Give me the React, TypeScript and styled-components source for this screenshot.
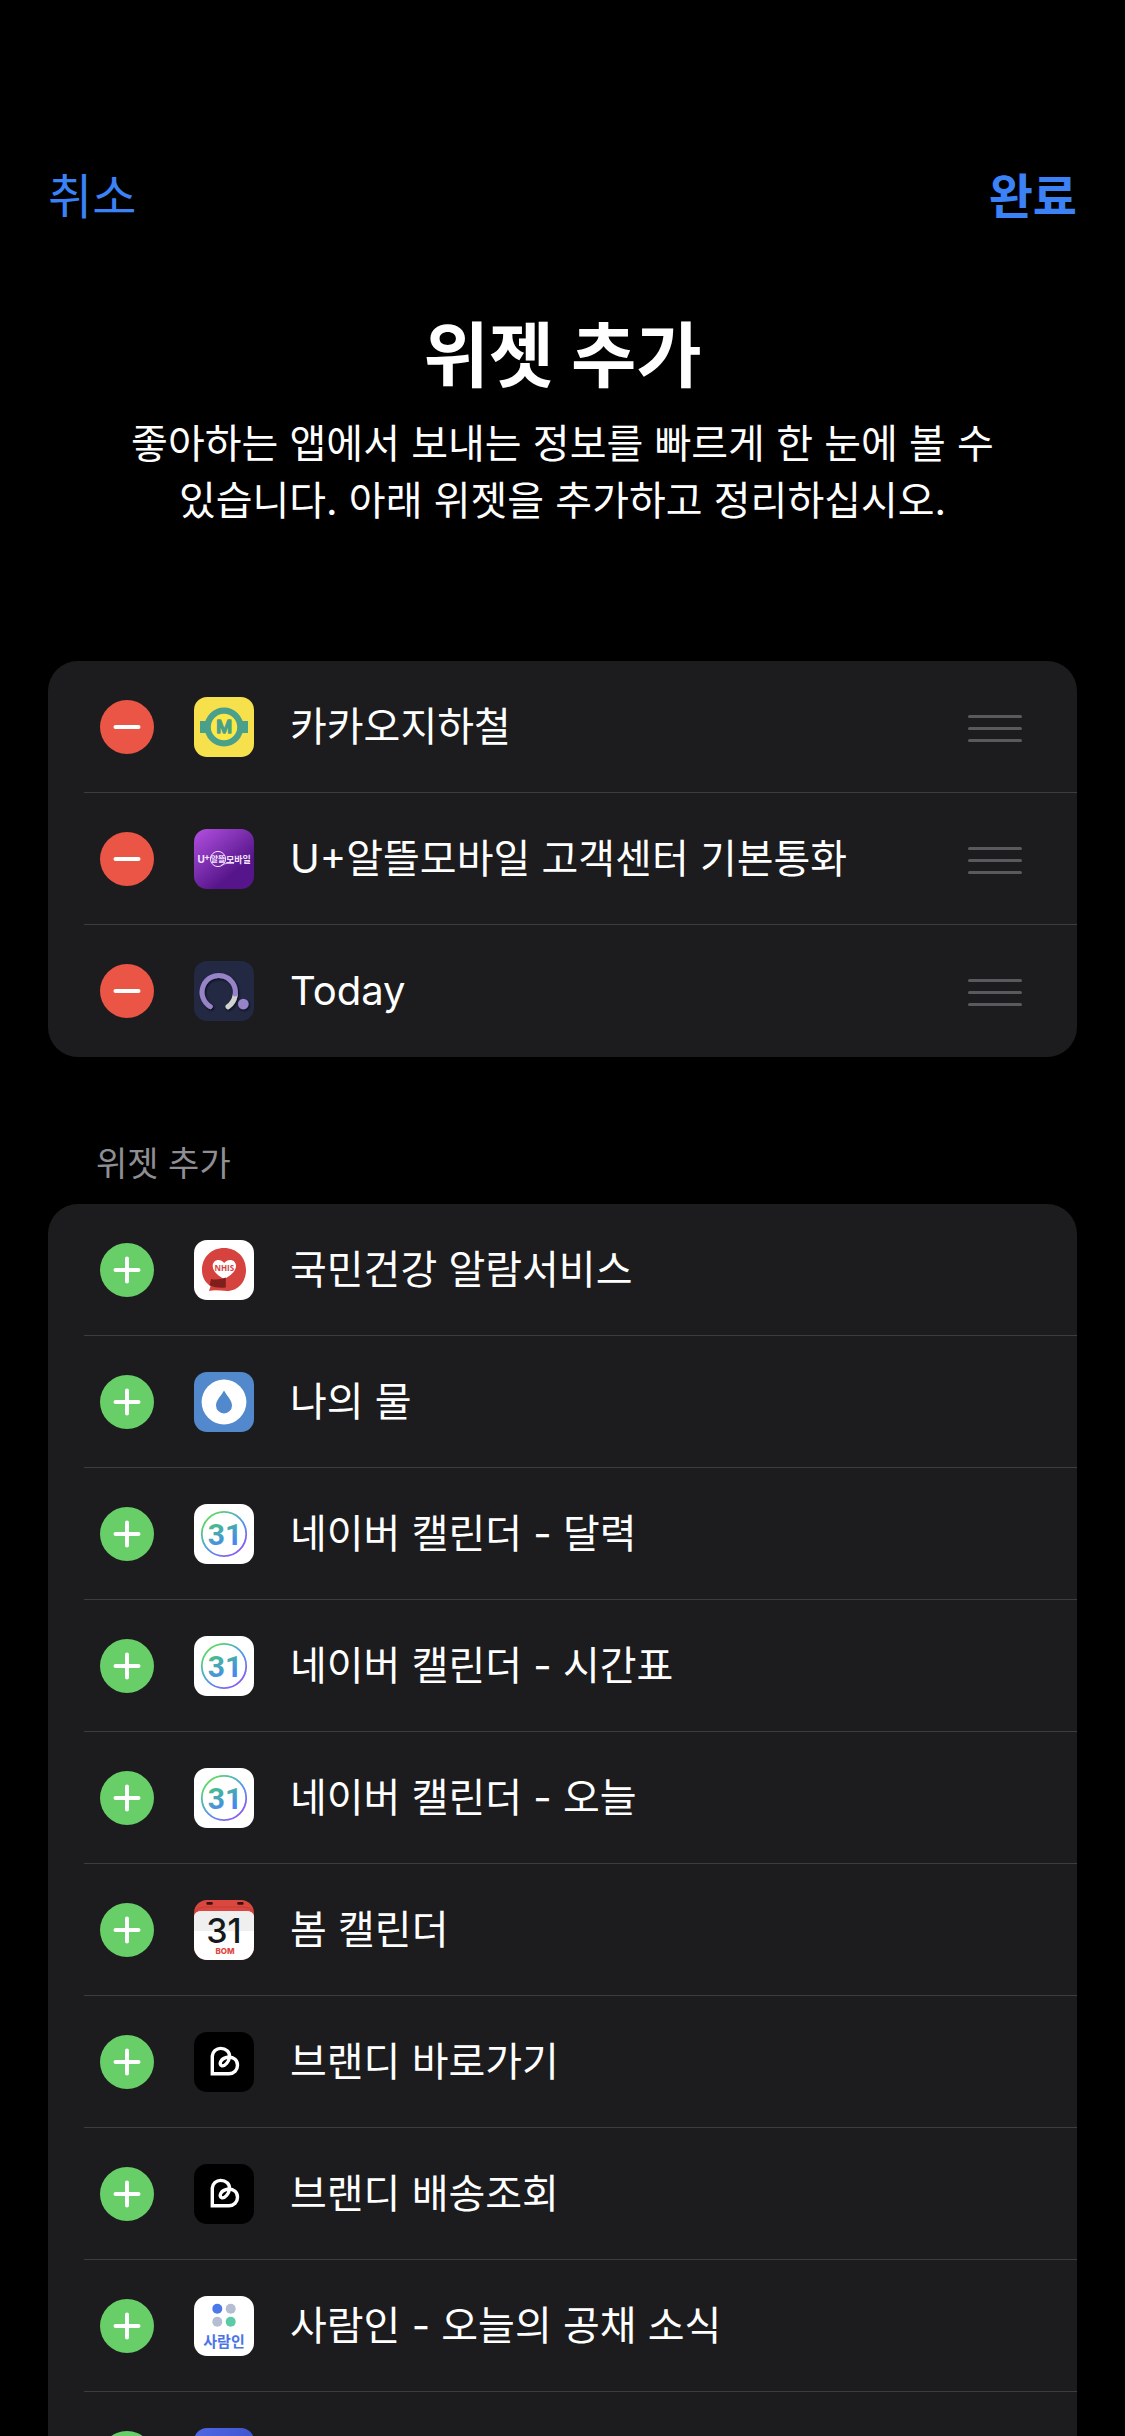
import React from "react";
import styled, { createGlobalStyle } from "styled-components";

const GlobalStyle = createGlobalStyle`
  * { box-sizing: border-box; }
  html, body { margin: 0; background: #000; }
  body { font-family: "Inter", "Noto Sans CJK KR", sans-serif; color: #fff; }
`;

const Screen = styled.main`
  height: 100vh;
  overflow: hidden;
  padding: 161px 48px 0;
  background: #000;
`;

const NavBar = styled.nav`
  display: flex;
  justify-content: space-between;
  align-items: center;
  height: 72px;
`;

const NavButton = styled.button<{ $strong?: boolean }>`
  padding: 0;
  border: 0;
  background: none;
  color: #3b82f7;
  font: inherit;
  font-size: 48px;
  line-height: 72px;
  font-weight: ${(p) => (p.$strong ? 700 : 400)};
`;

const Intro = styled.header`
  padding: 74px 72px 0;
  text-align: center;
`;

const Title = styled.h1`
  margin: 0;
  font-size: 71px;
  line-height: 96px;
  font-weight: 700;
`;

const Description = styled.p`
  margin: 12px 0 0;
  font-size: 40px;
  line-height: 57px;
  word-break: keep-all;
`;

const Section = styled.section<{ $gap: number }>`
  margin-top: ${(p) => p.$gap}px;
`;

const SectionTitle = styled.h2`
  margin: 0;
  padding: 0 48px 16px;
  color: #8e8e93;
  font-size: 34px;
  line-height: 48px;
  font-weight: 400;
`;

const Card = styled.ul`
  margin: 0;
  padding: 0;
  list-style: none;
  border-radius: 30px;
  background: #1c1c1e;
`;

const Row = styled.li`
  display: flex;
  padding-left: 36px;
`;

const RowBody = styled.div<{ $last?: boolean }>`
  display: flex;
  flex: 1;
  align-items: center;
  height: 132px;
  padding: 0 55px 0 16px;
  border-bottom: 1px solid ${(p) => (p.$last ? "transparent" : "#3d3d41")};
`;

const RoundButton = styled.button<{ $color: string }>`
  display: grid;
  place-items: center;
  flex: none;
  width: 54px;
  height: 54px;
  margin-right: 40px;
  padding: 0;
  border: 0;
  border-radius: 50%;
  background: ${(p) => p.$color};
`;

const AppIcon = styled.svg`
  flex: none;
  width: 60px;
  height: 60px;
  margin-right: 36px;
  border-radius: 13px;
`;

const Name = styled.span`
  flex: 1;
  font-size: 40px;
  line-height: 56px;
  white-space: nowrap;
`;

const Handle = styled.button`
  display: flex;
  flex-direction: column;
  gap: 9px;
  width: 54px;
  padding: 4px 0 0;
  border: 0;
  background: none;
`;

const HandleBar = styled.span`
  height: 3px;
  border-radius: 2px;
  background: #5a5a5e;
`;

type IconName =
  | "metro" | "uplus" | "today" | "nhis" | "water"
  | "naver" | "bom" | "brandi" | "saramin" | "blue";

const LATIN = "Inter, sans-serif";
const KOREAN = '"Noto Sans CJK KR", sans-serif';

function Artwork({ name, id }: { name: IconName; id: string }) {
  switch (name) {
    case "metro":
      return (
        <>
          <rect width="60" height="60" fill="#f6e04b" />
          <rect x="6" y="24" width="48" height="12" fill="#4aa08a" />
          <circle cx="30" cy="30" r="16.3" fill="#fde844" stroke="#4aa08a" strokeWidth="6.2" />
          <text x="30" y="36.4" textAnchor="middle" fontFamily="Roboto, sans-serif" fontSize="18" fontWeight="500"
            fill="#4aa08a" stroke="#4aa08a" strokeWidth="1.4" strokeLinejoin="round">M</text>
        </>
      );
    case "uplus":
      return (
        <>
          <defs>
            <linearGradient id={id} x1="0" y1="0" x2="0.75" y2="0.9">
              <stop offset="0" stopColor="#b44fe2" />
              <stop offset="0.45" stopColor="#8232b4" />
              <stop offset="0.85" stopColor="#56158a" />
            </linearGradient>
          </defs>
          <rect width="60" height="60" fill={`url(#${id})`} />
          <g fill="#f4e6ff" fontWeight="700">
            <text x="3.4" y="34" fontFamily={LATIN} fontSize="10">U</text>
            <text x="10" y="31.4" fontFamily={LATIN} fontSize="9">+</text>
            <text x="24" y="33" textAnchor="middle" fontFamily={KOREAN} fontSize="8">알뜰</text>
            <text x="32" y="33.6" fontFamily={KOREAN} fontSize="9">모바일</text>
          </g>
          <circle cx="24" cy="30" r="7.6" fill="none" stroke="#f4e6ff" strokeWidth="1" />
          <path d="M27 36.5 Q30 34.6 33 34.4 H40" fill="none" stroke="#f4e6ff" strokeWidth="0.8" />
        </>
      );
    case "today":
      return (
        <>
          <defs>
            <filter id={id} x="-20%" y="-20%" width="150%" height="150%">
              <feDropShadow dx="1" dy="1.2" stdDeviation="1" floodColor="#05060d" floodOpacity="0.8" />
            </filter>
          </defs>
          <rect width="60" height="60" fill="#232843" />
          <g filter={`url(#${id})`} fill="none" strokeWidth="5" strokeLinecap="round">
            <path d="M41.2 34 Q40 41.5 34 45.6" stroke="#d2d2d0" />
            <path d="M16.3 45.6 A16.7 16.7 0 1 1 41.3 33" stroke="#9783c8" />
            <circle cx="49.3" cy="43" r="5.3" fill="#9783c8" />
          </g>
        </>
      );
    case "nhis":
      return (
        <>
          <rect width="60" height="60" fill="#fff" />
          <path d="M30 8 C43 8 52 17.5 52 30 C52 42 44 51 33 51 C27 51 21 49.5 15 51 L16.6 46 C10.5 42 8 36.5 8 30 C8 17 17.5 8 30 8 Z" fill="#d6423d" />
          <path d="M30.2 39 C25 36.5 18.7 31.5 18.7 26 C18.7 19.5 26.5 18 30.2 23 C34 18 42 19.5 42 26 C42 31.5 35.5 36.5 30.2 39 Z" fill="#fff" />
          <path d="M17 39 Q25 40.5 31.8 37.5 V47.5 Q23 48.5 15.6 45.5 Z" fill="#7f1f1b" />
          <text x="30.3" y="30.8" textAnchor="middle" fontFamily={'"Open Sans", sans-serif'} fontSize="8" fontWeight="700" fill="#d6423d">NHIS</text>
        </>
      );
    case "water":
      return (
        <>
          <rect width="60" height="60" fill="#5189cc" />
          <circle cx="30" cy="30" r="22.4" fill="#fff" />
          <path d="M30 18.5 C32.5 23.5 38 28 38 33.4 A8 8 0 0 1 22 33.4 C22 28 27.5 23.5 30 18.5 Z" fill="#5189cc" />
        </>
      );
    case "naver":
      return (
        <>
          <defs>
            <linearGradient id={`${id}r`} gradientUnits="userSpaceOnUse" x1="14" y1="12" x2="44" y2="48">
              <stop offset="0" stopColor="#5fdc5a" />
              <stop offset="0.5" stopColor="#4aa0e8" />
              <stop offset="1" stopColor="#8a5cf0" />
            </linearGradient>
            <linearGradient id={`${id}t`} gradientUnits="userSpaceOnUse" x1="24" y1="18" x2="34" y2="42">
              <stop offset="0" stopColor="#48bd8c" />
              <stop offset="1" stopColor="#4686f5" />
            </linearGradient>
          </defs>
          <rect width="60" height="60" fill="#fff" />
          <circle cx="30" cy="30" r="22.2" fill="none" stroke={`url(#${id}r)`} strokeWidth="1.8" />
          <text x="31" y="40.6" textAnchor="middle" fontFamily="Roboto, sans-serif" fontSize="30" fontWeight="700" fill={`url(#${id}t)`}>31</text>
        </>
      );
    case "bom":
      return (
        <>
          <rect width="60" height="60" fill="#d9473f" />
          <path d="M0 60 V18 Q0 11 8 11 H52 Q60 11 60 18 V60 Z" fill="#fff" />
          <path d="M0 31 V18 Q0 11 8 11 H52 Q60 11 60 18 V31 Z" fill="#efefef" />
          <path d="M0 12 Q4 7 10 7 H50 Q56 7 60 12" fill="none" stroke="#b93631" strokeWidth="0.6" />
          <rect x="12.4" y="2" width="6.4" height="2.8" rx="1.2" fill="#3c1010" />
          <rect x="43.2" y="2" width="6.4" height="2.8" rx="1.2" fill="#3c1010" />
          <text x="30" y="43" textAnchor="middle" fontFamily={LATIN} fontSize="34" fontWeight="500" fill="#15191c">31</text>
          <text x="31" y="54.4" textAnchor="middle" fontFamily={LATIN} fontSize="8" fontWeight="800" fill="#dd4840">BOM</text>
        </>
      );
    case "brandi":
      return (
        <>
          <rect width="60" height="60" fill="#000" />
          <path
            d="M18.3 41.7 V24 A8.3 8.3 0 0 1 26.6 16.4 C32 16.4 35.8 20 35.5 24.5 C35.2 29.5 31 34.3 28 33.8 C24.5 33 26 26 34.5 25 C40 25 43.5 28.5 43.5 33.3 C43.5 38 40 41.7 35 41.7 Z"
            fill="none" stroke="#fff" strokeWidth="3.4" strokeLinejoin="miter" />
        </>
      );
    case "saramin":
      return (
        <>
          <rect width="60" height="60" fill="#fff" />
          <circle cx="23.3" cy="12.8" r="5" fill="#4c78ea" />
          <circle cx="36.7" cy="12.8" r="5" fill="#b5bdd2" />
          <circle cx="23.3" cy="25.7" r="5" fill="#b5bdd2" />
          <circle cx="36.7" cy="25.7" r="5" fill="#5acba6" />
          <text x="30" y="50.5" textAnchor="middle" fontFamily={KOREAN} fontSize="15" fontWeight="700" fill="#4c74e8">사람인</text>
        </>
      );
    case "blue":
      return (
        <>
          <defs>
            <linearGradient id={id} x1="0" y1="0" x2="1" y2="0.3">
              <stop offset="0" stopColor="#4f67e4" />
              <stop offset="1" stopColor="#4055d0" />
            </linearGradient>
          </defs>
          <rect width="60" height="60" fill={`url(#${id})`} />
        </>
      );
  }
}

interface Widget {
  icon: IconName;
  name?: string;
}

const active: Widget[] = [
  { icon: "metro", name: "카카오지하철" },
  { icon: "uplus", name: "U+알뜰모바일 고객센터 기본통화" },
  { icon: "today", name: "Today" },
];

const available: Widget[] = [
  { icon: "nhis", name: "국민건강 알람서비스" },
  { icon: "water", name: "나의 물" },
  { icon: "naver", name: "네이버 캘린더 - 달력" },
  { icon: "naver", name: "네이버 캘린더 - 시간표" },
  { icon: "naver", name: "네이버 캘린더 - 오늘" },
  { icon: "bom", name: "봄 캘린더" },
  { icon: "brandi", name: "브랜디 바로가기" },
  { icon: "brandi", name: "브랜디 배송조회" },
  { icon: "saramin", name: "사람인 - 오늘의 공채 소식" },
  { icon: "blue" },
];

function WidgetRow({ widget, id, added, last }: { widget: Widget; id: string; added?: boolean; last?: boolean }) {
  return (
    <Row>
      <RowBody $last={last}>
        <RoundButton type="button" $color={added ? "#eb5545" : "#68ce67"} aria-label={added ? "제거" : "추가"}>
          <svg width="54" height="54" viewBox="0 0 54 54" stroke="#fff" strokeWidth="4" strokeLinecap="round">
            <path d={added ? "M15.5 27 H38.5" : "M15.5 27 H38.5 M27 15.5 V38.5"} />
          </svg>
        </RoundButton>
        <AppIcon viewBox="0 0 60 60" aria-hidden="true">
          <Artwork name={widget.icon} id={id} />
        </AppIcon>
        <Name>{widget.name}</Name>
        {added && (
          <Handle type="button" aria-label="순서 변경">
            <HandleBar />
            <HandleBar />
            <HandleBar />
          </Handle>
        )}
      </RowBody>
    </Row>
  );
}

export default function App() {
  return (
    <>
      <GlobalStyle />
      <Screen>
        <NavBar>
          <NavButton type="button">취소</NavButton>
          <NavButton type="button" $strong>완료</NavButton>
        </NavBar>
        <Intro>
          <Title>위젯 추가</Title>
          <Description>좋아하는 앱에서 보내는 정보를 빠르게 한 눈에 볼 수 있습니다. 아래 위젯을 추가하고 정리하십시오.</Description>
        </Intro>
        <Section $gap={132}>
          <Card>
            {active.map((w, i) => (
              <WidgetRow key={i} widget={w} id={`a${i}`} added last={i === active.length - 1} />
            ))}
          </Card>
        </Section>
        <Section $gap={83}>
          <SectionTitle>위젯 추가</SectionTitle>
          <Card>
            {available.map((w, i) => (
              <WidgetRow key={i} widget={w} id={`b${i}`} last={i === available.length - 1} />
            ))}
          </Card>
        </Section>
      </Screen>
    </>
  );
}
